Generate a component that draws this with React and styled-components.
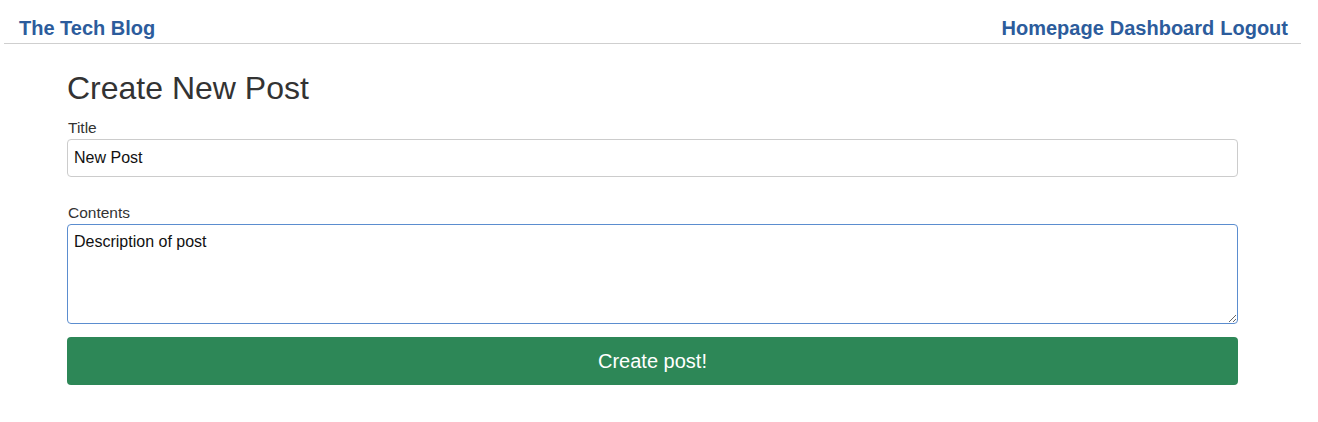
import React, { useEffect, useRef } from "react";
import styled, { createGlobalStyle } from "styled-components";

const GlobalStyle = createGlobalStyle`
  * { box-sizing: border-box; }
  html, body { margin: 0; padding: 0; background: #fff; }
  body { font-family: "Liberation Sans", Arial, sans-serif; color: #333; }
`;

const Header = styled.header`
  display: flex;
  justify-content: space-between;
  align-items: flex-end;
  margin: 0 17px 0 4px;
  padding: 16px 13px 3px 15px;
  border-bottom: 1px solid #cfcfcf;
`;

const Brand = styled.a`
  font-size: 20px;
  line-height: 24px;
  font-weight: bold;
  color: #2c5c9c;
  text-decoration: none;
`;

const Nav = styled.nav`
  display: flex;
  gap: 6px;
`;

const NavLink = styled.a`
  font-size: 20px;
  line-height: 24px;
  font-weight: bold;
  color: #2c5c9c;
  text-decoration: none;
`;

const Main = styled.main`
  width: 1171px;
  margin: 27px 0 0 67px;
`;

const Heading = styled.h2`
  margin: 0 0 12px;
  font-size: 32px;
  line-height: 35px;
  font-weight: normal;
  color: #333;
`;

const Form = styled.form`
  display: flex;
  flex-direction: column;
`;

const Field = styled.div`
  display: flex;
  flex-direction: column;
  margin-bottom: ${(p) => p.$mb}px;
`;

const Label = styled.label`
  font-size: 15.5px;
  line-height: 20px;
  margin: 0 0 1px 1px;
  color: #333;
`;

const Input = styled.input`
  height: 38px;
  width: 100%;
  padding: 0 6px;
  font-family: "Liberation Sans", Arial, sans-serif;
  font-size: 16px;
  color: #111;
  border: 1px solid #ccc;
  border-radius: 4px;
  outline: none;
`;

const TextArea = styled.textarea`
  height: 100px;
  width: 100%;
  padding: 7px 6px 6px;
  font-family: "Liberation Sans", Arial, sans-serif;
  font-size: 16px;
  line-height: 20px;
  color: #111;
  caret-color: #111;
  border: 1px solid #5b8dcf;
  border-radius: 4px;
  outline: none;
  resize: both;
`;

const SubmitButton = styled.button`
  height: 48px;
  width: 100%;
  border: none;
  border-radius: 4px;
  background: #2d8757;
  color: #fff;
  font-family: "Liberation Sans", Arial, sans-serif;
  font-size: 20px;
  cursor: pointer;
`;

export default function App() {
  const areaRef = useRef(null);
  useEffect(() => {
    const el = areaRef.current;
    if (el) {
      el.focus();
      const n = el.value.length;
      el.setSelectionRange(n, n);
    }
  }, []);
  return (
    <>
      <GlobalStyle />
      <Header>
        <Brand href="#">The Tech Blog</Brand>
        <Nav>
          <NavLink href="#">Homepage</NavLink>
          <NavLink href="#">Dashboard</NavLink>
          <NavLink href="#">Logout</NavLink>
        </Nav>
      </Header>
      <Main>
        <Heading>Create New Post</Heading>
        <Form onSubmit={(e) => e.preventDefault()}>
          <Field $mb={26}>
            <Label htmlFor="title">Title</Label>
            <Input id="title" defaultValue="New Post" />
          </Field>
          <Field $mb={13}>
            <Label htmlFor="contents">Contents</Label>
            <TextArea ref={areaRef} id="contents" defaultValue="Description of post " />
          </Field>
          <SubmitButton type="submit">Create post!</SubmitButton>
        </Form>
      </Main>
    </>
  );
}
